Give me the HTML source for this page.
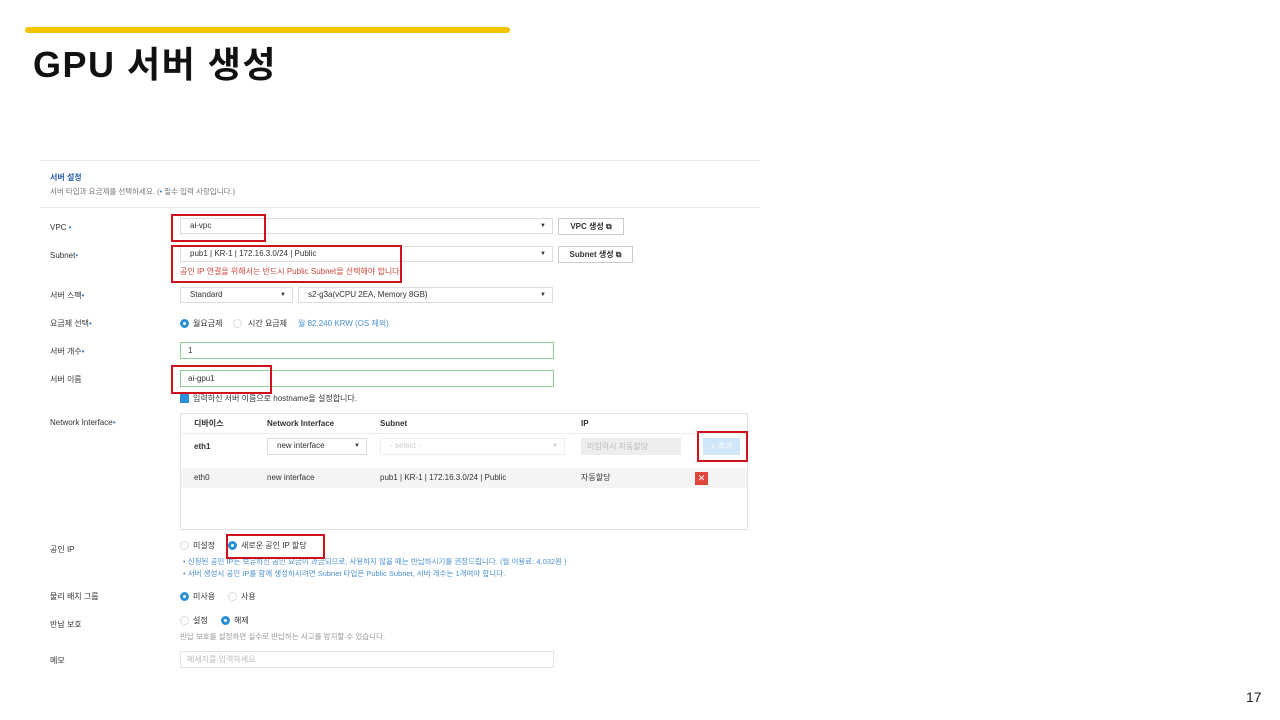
<!DOCTYPE html>
<html><head><meta charset="utf-8"><style>
body{margin:0;width:1280px;height:720px;background:#fff;position:relative;overflow:hidden;font-family:"Liberation Sans","Noto Sans CJK KR",sans-serif;color:#333}
.a{position:absolute;white-space:nowrap}
.t{font-size:8px;line-height:10px}
.lbl{font-size:8px;color:#333}
.sel{position:absolute;border:1px solid #ddd;background:#fff;height:16px;box-sizing:border-box;font-size:8px;line-height:14px;padding-left:9px}
.sel .ar{position:absolute;right:6px;top:0;font-size:6px}
.inp{position:absolute;border:1px solid #8fd18f;height:17px;box-sizing:border-box;font-size:8px;line-height:15px;padding-left:7px}
.btn{position:absolute;border:1px solid #ccc;height:17px;box-sizing:border-box;font-size:8px;line-height:15px;font-weight:bold;text-align:center}
.red{position:absolute;border:2.5px solid #d0101b;box-sizing:border-box}
.rad{position:absolute;width:9px;height:9px;border-radius:50%;box-sizing:border-box;border:1px solid #ddd;background:#fff}
.rad.on{border:3px solid #2a8fd6}
.dot{color:#2a7fd0}
</style></head><body>
<div class="a" style="left:25px;top:27px;width:485px;height:6px;background:#f5c400;border-radius:3px"></div>
<div class="a" style="left:33px;top:42px;font-size:36px;font-weight:bold;color:#111;line-height:46px;letter-spacing:1.5px">GPU 서버 생성</div>

<div class="a" style="left:40px;top:160px;width:720px;height:1px;background:#e6e6e6"></div>
<div class="a t" style="left:50px;top:173px;color:#2d5fa6;font-weight:bold">서버 설정</div>
<div class="a t" style="left:50px;top:187px;color:#777;font-size:7.5px">서버 타입과 요금제를 선택하세요. (<span class="dot">•</span> 필수 입력 사항입니다.)</div>
<div class="a" style="left:40px;top:207px;width:720px;height:1px;background:#e6e6e6"></div>

<div class="a t lbl" style="left:50px;top:223px">VPC <span class="dot">•</span></div>
<div class="a t lbl" style="left:50px;top:251px">Subnet<span class="dot">•</span></div>
<div class="a t lbl" style="left:50px;top:291px">서버 스펙<span class="dot">•</span></div>
<div class="a t lbl" style="left:50px;top:319px">요금제 선택<span class="dot">•</span></div>
<div class="a t lbl" style="left:50px;top:347px">서버 개수<span class="dot">•</span></div>
<div class="a t lbl" style="left:50px;top:375px">서버 이름</div>
<div class="a t lbl" style="left:50px;top:418px">Network Interface<span class="dot">•</span></div>
<div class="a t lbl" style="left:50px;top:545px">공인 IP</div>
<div class="a t lbl" style="left:50px;top:592px">물리 배치 그룹</div>
<div class="a t lbl" style="left:50px;top:620px">반납 보호</div>
<div class="a t lbl" style="left:50px;top:656px">메모</div>

<div class="sel" style="left:180px;top:218px;width:373px">ai-vpc<span class="ar">▼</span></div>
<div class="btn" style="left:558px;top:218px;width:66px">VPC 생성 ⧉</div>
<div class="sel" style="left:180px;top:246px;width:373px">pub1 | KR-1 | 172.16.3.0/24 | Public<span class="ar">▼</span></div>
<div class="btn" style="left:558px;top:246px;width:75px">Subnet 생성 ⧉</div>
<div class="a t" style="left:180px;top:267px;color:#d0463c">공인 IP 연결을 위해서는 반드시 Public Subnet을 선택해야 합니다.</div>

<div class="sel" style="left:180px;top:287px;width:113px">Standard<span class="ar">▼</span></div>
<div class="sel" style="left:298px;top:287px;width:255px">s2-g3a(vCPU 2EA, Memory 8GB)<span class="ar">▼</span></div>

<div class="rad on" style="left:180px;top:319px"></div>
<div class="a t" style="left:193px;top:319px">월요금제</div>
<div class="rad" style="left:233px;top:319px"></div>
<div class="a t" style="left:248px;top:319px">시간 요금제</div>
<div class="a t" style="left:298px;top:319px;color:#4a90d0">월 82,240 KRW (OS 제외)</div>

<div class="inp" style="left:180px;top:342px;width:374px">1</div>
<div class="inp" style="left:180px;top:370px;width:374px">ai-gpu1</div>
<div class="a" style="left:180px;top:394px;width:9px;height:9px;background:#2a8fd6"></div>
<div class="a t" style="left:193px;top:394px">입력하신 서버 이름으로 hostname을 설정합니다.</div>

<div class="a" style="left:180px;top:413px;width:568px;height:117px;border:1px solid #e4e4e4;box-sizing:border-box"></div>
<div class="a" style="left:181px;top:433px;width:566px;height:1px;background:#eee"></div>
<div class="a t" style="left:194px;top:419px;font-weight:bold">디바이스</div>
<div class="a t" style="left:267px;top:419px;font-weight:bold">Network Interface</div>
<div class="a t" style="left:380px;top:419px;font-weight:bold">Subnet</div>
<div class="a t" style="left:581px;top:419px;font-weight:bold">IP</div>
<div class="a t" style="left:194px;top:442px;font-weight:bold">eth1</div>
<div class="sel" style="left:267px;top:438px;width:100px;height:17px">new interface<span class="ar">▼</span></div>
<div class="sel" style="left:380px;top:438px;width:185px;height:17px;color:#ccc;border-color:#eee">- select -<span class="ar">▼</span></div>
<div class="a t" style="left:581px;top:438px;width:100px;height:17px;background:#eee;color:#bbb;line-height:17px;padding-left:6px;box-sizing:border-box">미입력시 자동할당</div>
<div class="a t" style="left:703px;top:438px;width:37px;height:17px;background:#cfe7f8;color:#fff;line-height:17px;text-align:center">+ 추가</div>
<div class="a" style="left:181px;top:468px;width:566px;height:20px;background:#f4f4f4"></div>
<div class="a t" style="left:194px;top:473px">eth0</div>
<div class="a t" style="left:267px;top:473px">new interface</div>
<div class="a t" style="left:380px;top:473px">pub1 | KR-1 | 172.16.3.0/24 | Public</div>
<div class="a t" style="left:581px;top:473px">자동할당</div>
<div class="a" style="left:695px;top:472px;width:13px;height:13px;background:#e0463c;color:#fff;font-size:9px;line-height:13px;text-align:center">✕</div>

<div class="rad" style="left:180px;top:541px"></div>
<div class="a t" style="left:193px;top:541px">미설정</div>
<div class="rad on" style="left:228px;top:541px"></div>
<div class="a t" style="left:241px;top:541px">새로운 공인 IP 할당</div>
<div class="a t" style="left:183px;top:557px;color:#4a90d0;font-size:7.5px">• 신청된 공인 IP는 보유하신 공인 요금이 과금되므로, 사용하지 않을 때는 반납하시기를 권장드립니다. (월 이용료: 4,032원 )</div>
<div class="a t" style="left:183px;top:569px;color:#4a90d0;font-size:7.5px">• 서버 생성시 공인 IP를 함께 생성하시려면 Subnet 타입은 Public Subnet, 서버 개수는 1개여야 합니다.</div>

<div class="rad on" style="left:180px;top:592px"></div>
<div class="a t" style="left:193px;top:592px">미사용</div>
<div class="rad" style="left:228px;top:592px"></div>
<div class="a t" style="left:241px;top:592px">사용</div>

<div class="rad" style="left:180px;top:616px"></div>
<div class="a t" style="left:193px;top:616px">설정</div>
<div class="rad on" style="left:221px;top:616px"></div>
<div class="a t" style="left:234px;top:616px">해제</div>
<div class="a t" style="left:180px;top:632px;color:#999;font-size:7.5px">반납 보호를 설정하면 실수로 반납하는 사고를 방지할 수 있습니다.</div>
<div class="a t" style="left:180px;top:651px;width:374px;height:17px;border:1px solid #e4e4e4;box-sizing:border-box;color:#bbb;line-height:15px;padding-left:6px">메세지를 입력하세요</div>

<div class="red" style="left:171px;top:214px;width:95px;height:28px"></div>
<div class="red" style="left:171px;top:245px;width:231px;height:38px"></div>
<div class="red" style="left:171px;top:365px;width:101px;height:29px"></div>
<div class="red" style="left:697px;top:431px;width:51px;height:31px"></div>
<div class="red" style="left:226px;top:534px;width:99px;height:25px"></div>

<div class="a" style="left:1246px;top:689px;font-size:14px;color:#222">17</div>
</body></html>
